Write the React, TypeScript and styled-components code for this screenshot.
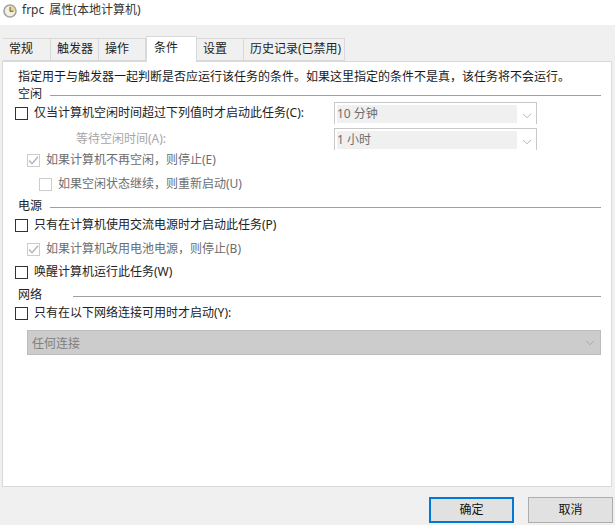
import styled, { createGlobalStyle } from "styled-components";

interface RowProps {
  $top: number;
  $height?: number;
  $indent?: number;
}
interface LabelProps {
  $tone?: "normal" | "dim" | "faint";
}

const GlobalStyle = createGlobalStyle`
  html, body {
    margin: 0;
    padding: 0;
    background: #f0f0f0;
  }
  body {
    font-family: "Noto Sans", "Noto Sans CJK SC", sans-serif;
    font-size: 12px;
    color: #1a1a1a;
  }
`;

const Dialog = styled.div`
  width: 615px;
  height: 525px;
  display: flex;
  flex-direction: column;
  overflow: hidden;
`;
const TitleBar = styled.div`
  height: 25px;
  flex-shrink: 0;
  background: #ffffff;
  display: flex;
  align-items: center;
  gap: 5px;
  padding: 0 0 6px 3px;
  box-sizing: border-box;
  color: #333;
  line-height: 16px;
  word-spacing: 2px;
`;
const TabStrip = styled.div`
  height: 36px;
  flex-shrink: 0;
  display: flex;
  align-items: flex-end;
  padding-left: 3px;
  position: relative;
  z-index: 1;
`;
const Tab = styled.div<{ $width: number; $active?: boolean }>`
  width: ${(p) => p.$width}px;
  height: ${(p) => (p.$active ? 26 : 23)}px;
  box-sizing: border-box;
  display: flex;
  align-items: center;
  padding-left: ${(p) => (p.$active ? 7 : 6)}px;
  padding-bottom: ${(p) => (p.$active ? 5 : 3)}px;
  margin-bottom: ${(p) => (p.$active ? -1 : 0)}px;
  background: ${(p) => (p.$active ? "#ffffff" : "#f0f0f0")};
  border: 1px solid #d9d9d9;
  border-left-width: ${(p) => (p.$active ? 1 : 0)}px;
  border-bottom-width: ${(p) => (p.$active ? 0 : 1)}px;
  white-space: nowrap;
  color: #222;
`;
const Panel = styled.div`
  width: 610px;
  height: 426px;
  margin-left: 2px;
  flex-shrink: 0;
  box-sizing: border-box;
  background: #ffffff;
  border: 1px solid #d9d9d9;
  padding: 0 10px 0 12px;
`;
const Row = styled.div<RowProps>`
  height: ${(p) => p.$height ?? 20}px;
  margin-top: ${(p) => p.$top}px;
  margin-left: ${(p) => p.$indent ?? 0}px;
  display: flex;
  align-items: center;
  white-space: nowrap;
  line-height: 16px;
`;
const GroupLine = styled.div<{ $gap?: number }>`
  flex: 1;
  height: 1px;
  background: #a0a0a0;
  margin-left: ${(p) => p.$gap ?? 8}px;
  margin-top: 2px;
`;
const GroupName = styled.span`
  margin-left: 3px;
  color: #222;
`;
const Box = styled.span<{ $disabled?: boolean }>`
  width: 13px;
  height: 13px;
  box-sizing: border-box;
  flex-shrink: 0;
  border: 1px solid ${(p) => (p.$disabled ? "#cccccc" : "#333333")};
  background: #ffffff;
  margin-right: 6px;
  display: flex;
  align-items: center;
  justify-content: center;
`;
const Label = styled.span<LabelProps>`
  color: ${(p) =>
    p.$tone === "faint" ? "#a6a6a6" : p.$tone === "dim" ? "#6d6d6d" : "#222222"};
`;
const Spacer = styled.div`
  flex: 1;
`;
const Combo = styled.div`
  width: 203px;
  height: 22px;
  margin-right: 64px;
  box-sizing: border-box;
  border: 1px solid #c8c8c8;
  border-bottom: 0;
  padding: 2px 0 0 2px;
  display: flex;
`;
const ComboValue = styled.div`
  width: 180px;
  height: 18px;
  background: #f0f0f0;
  color: #6d6d6d;
  display: flex;
  align-items: center;
  box-sizing: border-box;
`;
const ComboArrow = styled.div`
  flex: 1;
  display: flex;
  align-items: center;
  justify-content: center;
  padding-top: 2px;
`;
const NetworkSelect = styled.div`
  height: 25px;
  margin: 7px 0 0 12px;
  box-sizing: border-box;
  background: #cccccc;
  border: 1px solid #bcbcbc;
  color: #808080;
  display: flex;
  align-items: center;
  justify-content: space-between;
  padding: 0 5px 0 4px;
`;
const ButtonBar = styled.div`
  flex: 1;
  display: flex;
  justify-content: flex-end;
  gap: 14px;
  padding: 10px 2px 0 0;
`;
const Button = styled.div<{ $primary?: boolean }>`
  width: 85px;
  height: 26px;
  box-sizing: border-box;
  background: #e1e1e1;
  border: ${(p) => (p.$primary ? "2px solid #0078d7" : "1px solid #adadad")};
  display: flex;
  align-items: center;
  justify-content: center;
  padding-bottom: 2px;
  color: #111;
`;
const IconSlot = styled.span`
  display: flex;
  margin-top: 2px;
`;

const Chevron = ({ color }: { color: string }) => (
  <svg width="10" height="6" viewBox="0 0 10 6" fill="none">
    <path d="M1 .8 5 4.8 9 .8" stroke={color} strokeWidth="1" />
  </svg>
);

const Check = ({ disabled, checked }: { disabled?: boolean; checked?: boolean }) => (
  <Box $disabled={disabled}>
    {checked && (
      <svg width="11" height="11" viewBox="0 0 11 11" fill="none">
        <path d="M1 5.5 4 8.8 10 1.8" stroke="#b4b4b4" strokeWidth="1.4" />
      </svg>
    )}
  </Box>
);

const ClockIcon = () => (
  <IconSlot>
    <svg width="14" height="14" viewBox="0 0 14 14" fill="none">
      <circle cx="7" cy="7" r="6" fill="#f6efdc" stroke="#9aa3ad" strokeWidth="1.6" />
      <path d="M7 7V1.8A5.2 5.2 0 0 1 12.2 7Z" fill="#ecd48e" />
      <path d="M7 3V7.3H10.5" stroke="#55595f" strokeWidth="1" />
    </svg>
  </IconSlot>
);

export default function App() {
  return (
    <>
      <GlobalStyle />
      <Dialog>
        <TitleBar>
          <ClockIcon />
          <span>frpc 属性(本地计算机)</span>
        </TitleBar>
        <TabStrip>
          <Tab $width={48}>常规</Tab>
          <Tab $width={48}>触发器</Tab>
          <Tab $width={47}>操作</Tab>
          <Tab $width={51} $active>条件</Tab>
          <Tab $width={47}>设置</Tab>
          <Tab $width={101}>历史记录(已禁用)</Tab>
        </TabStrip>
        <Panel>
          <Row $top={6} $height={18} $indent={3}>
            指定用于与触发器一起判断是否应运行该任务的条件。如果这里指定的条件不是真，该任务将不会运行。
          </Row>
          <Row $top={0} $height={16}>
            <GroupName>空闲</GroupName>
            <GroupLine />
          </Row>
          <Row $top={0} $height={22}>
            <Check />
            <Label>仅当计算机空闲时间超过下列值时才启动此任务(C):</Label>
            <Spacer />
            <Combo>
              <ComboValue>10 分钟</ComboValue>
              <ComboArrow><Chevron color="#b5b5b5" /></ComboArrow>
            </Combo>
          </Row>
          <Row $top={4} $height={22} $indent={61}>
            <Label $tone="faint">等待空闲时间(A):</Label>
            <Spacer />
            <Combo>
              <ComboValue>1 小时</ComboValue>
              <ComboArrow><Chevron color="#b5b5b5" /></ComboArrow>
            </Combo>
          </Row>
          <Row $top={0} $indent={12}>
            <Check disabled checked />
            <Label $tone="dim">如果计算机不再空闲，则停止(E)</Label>
          </Row>
          <Row $top={4} $indent={24}>
            <Check disabled />
            <Label $tone="dim">如果空闲状态继续，则重新启动(U)</Label>
          </Row>
          <Row $top={4} $height={16}>
            <GroupName>电源</GroupName>
            <GroupLine />
          </Row>
          <Row $top={1}>
            <Check />
            <Label>只有在计算机使用交流电源时才启动此任务(P)</Label>
          </Row>
          <Row $top={4} $indent={12}>
            <Check disabled checked />
            <Label $tone="dim">如果计算机改用电池电源，则停止(B)</Label>
          </Row>
          <Row $top={3}>
            <Check />
            <Label>唤醒计算机运行此任务(W)</Label>
          </Row>
          <Row $top={5} $height={16}>
            <GroupName>网络</GroupName>
            <GroupLine $gap={31} />
          </Row>
          <Row $top={0}>
            <Check />
            <Label>只有在以下网络连接可用时才启动(Y):</Label>
          </Row>
          <NetworkSelect>
            <span>任何连接</span>
            <Chevron color="#a8a8a8" />
          </NetworkSelect>
        </Panel>
        <ButtonBar>
          <Button $primary>确定</Button>
          <Button>取消</Button>
        </ButtonBar>
      </Dialog>
    </>
  );
}
